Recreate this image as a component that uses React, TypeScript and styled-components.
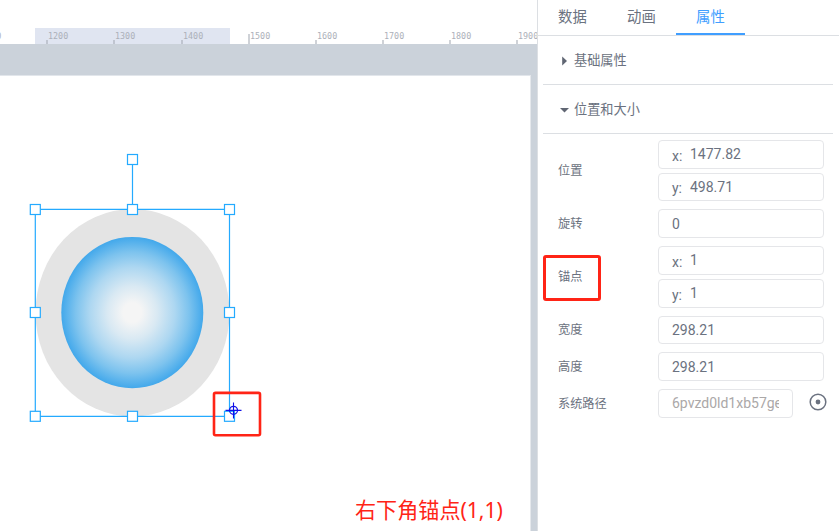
import React from 'react';
import styled, { createGlobalStyle } from 'styled-components';

const GlobalStyle = createGlobalStyle`
  * { box-sizing: border-box; }
  body {
    margin: 0;
    overflow: hidden;
    background: #fff;
    color: #6b7280;
    font-family: Roboto, "Noto Sans CJK SC", sans-serif;
  }
`;

const Page = styled.div`
  display: flex;
  width: 839px;
  height: 531px;
  overflow: hidden;
`;

const Workspace = styled.main`
  flex: none;
  width: 537px;
  display: flex;
  flex-direction: column;
  overflow: hidden;
`;

const Ruler = styled.div`
  position: relative;
  height: 44px;
  flex: none;
  overflow: hidden;
`;

const RulerRange = styled.div`
  width: 195px;
  height: 16px;
  margin: 28px 0 0 35px;
  background: #e0e5f1;
`;

const Tick = styled.div<{ $x: number; $tall?: boolean }>`
  position: absolute;
  left: ${(p) => p.$x}px;
  bottom: 0;
  width: 2px;
  height: ${(p) => (p.$tall ? 10 : 4)}px;
  background: rgba(160, 165, 175, 0.5);
`;

const TickLabel = styled.span<{ $x: number }>`
  position: absolute;
  left: ${(p) => p.$x}px;
  top: 30px;
  font: 8.4px/12px "DejaVu Sans Mono", monospace;
  color: #acb0b9;
`;

const Stage = styled.div`
  flex: 1;
  min-height: 0;
  padding: 31px 6px 0 0;
  background: #cbd2da;
`;

const Artboard = styled.div`
  position: relative;
  height: 456px;
  background: #fff;
  border-top: 1px solid #e2e6eb;
  border-right: 1px solid #e5e8ec;
`;

const Drawing = styled.svg`
  position: absolute;
  left: 0;
  top: -1px;
`;

const Caption = styled.div`
  position: absolute;
  left: 355px;
  top: 420px;
  font: 21.1px/28px "Noto Sans", "Noto Sans CJK SC", sans-serif;
  color: #ff2416;
  white-space: nowrap;
`;

const Panel = styled.aside`
  flex: 1;
  min-width: 0;
  border-left: 1px solid #dcdfe3;
`;

const Tabs = styled.nav`
  display: flex;
  height: 36px;
  border-bottom: 1px solid #dcdfe3;
`;

const Tab = styled.div<{ $active?: boolean }>`
  width: 69px;
  height: 35px;
  text-align: center;
  font-size: 14.4px;
  line-height: 36px;
  color: ${(p) => (p.$active ? '#409eff' : '#6b7280')};
  box-shadow: ${(p) => (p.$active ? 'inset 0 -2px #409eff' : 'none')};
`;

const Section = styled.div`
  display: flex;
  align-items: center;
  gap: 4px;
  height: 49px;
  margin: 0 6px 0 5px;
  padding: 1px 0 0 16px;
  border-bottom: 1px solid #dcdfe3;
  font-size: 13.2px;
  line-height: 20px;
`;

const Form = styled.div`
  display: flex;
  flex-direction: column;
  gap: 8px;
  padding: 6px 15px 0 20px;
`;

const Row = styled.div`
  display: flex;
  align-items: center;
`;

const Label = styled.div`
  position: relative;
  flex: none;
  width: 100px;
  font-size: 12.2px;
  line-height: 18px;
`;

const Inputs = styled.div`
  display: flex;
  flex-direction: column;
  gap: 4px;
`;

const Field = styled.div<{ $h?: number; $short?: boolean }>`
  display: flex;
  align-items: center;
  flex: none;
  width: ${(p) => (p.$short ? 135 : 166)}px;
  height: ${(p) => p.$h ?? 29}px;
  padding: 0 13px;
  border: 1px solid #e5e6e9;
  border-radius: 4px;
  font-size: 14px;
  line-height: 20px;
  color: ${(p) => (p.$short ? '#aba8a8' : '#6b7280')};
`;

const Axis = styled.span`
  width: 18px;
  padding-top: 2px;
`;

const Value = styled.span<{ $raised?: boolean }>`
  flex: 1;
  overflow: hidden;
  white-space: nowrap;
  padding-bottom: ${(p) => (p.$raised ? 1 : 0)}px;
`;

const TargetIcon = styled.svg`
  margin: 0 0 3px 16px;
  flex: none;
`;

const Mark = styled.div`
  position: absolute;
  left: -15px;
  top: -13px;
  width: 58px;
  height: 46px;
  border: 3px solid #ff2416;
  border-radius: 3px;
`;

const ticks = [
  { x: -21, value: 1100 },
  { x: 46, value: 1200 },
  { x: 113, value: 1300 },
  { x: 181, value: 1400 },
  { x: 248, value: 1500, tall: true },
  { x: 315, value: 1600 },
  { x: 382, value: 1700 },
  { x: 449, value: 1800 },
  { x: 516, value: 1900 },
];

const handles = [
  [132.5, 159.5],
  [35.3, 209.5], [132.5, 209.5], [229.5, 209.5],
  [35.3, 312.5], [229.5, 312.5],
  [35.3, 416.3], [132.5, 416.3], [229.5, 416.3],
];

function Selection() {
  return (
    <Drawing width="530" height="456" viewBox="0 75 530 456" fill="none">
      <defs>
        <radialGradient id="bulb">
          <stop offset="0" stopColor="#f5f5f5" />
          <stop offset="0.13" stopColor="#f5f5f5" />
          <stop offset="0.35" stopColor="#d9e9f3" />
          <stop offset="0.6" stopColor="#add7f1" />
          <stop offset="0.8" stopColor="#7dc3ee" />
          <stop offset="1" stopColor="#42a8eb" />
        </radialGradient>
      </defs>
      <ellipse cx="132.5" cy="312.7" rx="97" ry="103.7" fill="#e4e4e4" />
      <ellipse cx="132.3" cy="312.6" rx="71" ry="75.7" fill="url(#bulb)" />
      <path d="M132.5 159.5V209.5M35.3 209.3H229.5V416.3H35.3Z" stroke="#24aaff" strokeWidth="1.2" />
      {handles.map(([x, y]) => (
        <rect key={`${x}-${y}`} x={x - 5} y={y - 5} width="10" height="10" fill="#fff" stroke="#24aaff" strokeWidth="1.2" />
      ))}
      <g stroke="#1010e8">
        <circle cx="233.5" cy="410.3" r="4" strokeWidth="1.2" />
        <path d="M225.5 410.4H241.5M233.5 402.5V418.5" strokeWidth="1.1" />
      </g>
      <rect x="214" y="392.9" width="46" height="42.3" rx="1.5" stroke="#ff2416" strokeWidth="2.6" />
    </Drawing>
  );
}

function Arrow({ open }: { open?: boolean }) {
  return (
    <svg width="11" height="12" viewBox="0 0 11 12" fill="#606673">
      <path d={open ? 'M1 4h9L5.5 8.5z' : 'M3.2 1.5v9L8 6z'} />
    </svg>
  );
}

export default function App() {
  return (
    <Page>
      <GlobalStyle />
      <Workspace>
        <Ruler>
          <RulerRange />
          {ticks.map((t) => (
            <React.Fragment key={t.value}>
              <Tick $x={t.x} $tall={t.tall} />
              <TickLabel $x={t.x + 2}>{t.value}</TickLabel>
            </React.Fragment>
          ))}
        </Ruler>
        <Stage>
          <Artboard>
            <Selection />
            <Caption>右下角锚点(1,1)</Caption>
          </Artboard>
        </Stage>
      </Workspace>
      <Panel>
        <Tabs>
          <Tab>数据</Tab>
          <Tab>动画</Tab>
          <Tab $active>属性</Tab>
        </Tabs>
        <Section><Arrow />基础属性</Section>
        <Section><Arrow open />位置和大小</Section>
        <Form>
          <Row>
            <Label>位置</Label>
            <Inputs>
              <Field><Axis>x:</Axis><Value $raised>1477.82</Value></Field>
              <Field $h={28}><Axis>y:</Axis><Value>498.71</Value></Field>
            </Inputs>
          </Row>
          <Row><Label>旋转</Label><Field><Value>0</Value></Field></Row>
          <Row>
            <Label>锚点<Mark /></Label>
            <Inputs>
              <Field><Axis>x:</Axis><Value $raised>1</Value></Field>
              <Field><Axis>y:</Axis><Value $raised>1</Value></Field>
            </Inputs>
          </Row>
          <Row><Label>宽度</Label><Field $h={28}><Value>298.21</Value></Field></Row>
          <Row><Label>高度</Label><Field><Value>298.21</Value></Field></Row>
          <Row>
            <Label>系统路径</Label>
            <Field $short><Value $raised>6pvzd0ld1xb57ge</Value></Field>
            <TargetIcon width="18" height="18" viewBox="0 0 18 18">
              <circle cx="9" cy="9" r="7.8" fill="none" stroke="#6b7280" strokeWidth="1.5" />
              <circle cx="9" cy="9" r="2.4" fill="#6b7280" />
            </TargetIcon>
          </Row>
        </Form>
      </Panel>
    </Page>
  );
}
